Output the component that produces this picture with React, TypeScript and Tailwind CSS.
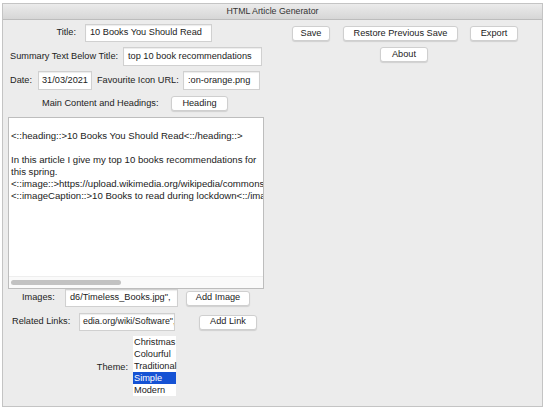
import React from 'react';

const font = { fontFamily: '"Liberation Sans", Arial, sans-serif' };

function Field({ value, className }: { value: string; className: string }) {
  return (
    <div
      className={`shrink-0 bg-white border border-[#d0d0d0] shadow-[inset_0_1px_1px_rgba(0,0,0,0.08)] pl-[4px] flex items-center overflow-hidden whitespace-nowrap text-[#222] ${className}`}
    >
      {value}
    </div>
  );
}

function Btn({ label, className }: { label: string; className: string }) {
  return (
    <div
      className={`shrink-0 bg-white border border-[#cfcfcf] rounded-[3px] shadow-[0_1px_1px_rgba(0,0,0,0.12)] flex items-center justify-center whitespace-nowrap text-[#222] ${className}`}
    >
      {label}
    </div>
  );
}

function Label({ text, className }: { text: string; className: string }) {
  return <span className={`shrink-0 whitespace-nowrap text-[#222] ${className}`}>{text}</span>;
}

export default function App() {
  const themes = ['Christmas', 'Colourful', 'Traditional', 'Simple', 'Modern'];

  return (
    <div className="w-[546px] h-[413px] bg-white pt-[3px] pl-[2px] text-[9.2px]" style={font}>
      <div className="w-[541px] h-[404px] border border-[#c4c4c4] bg-[#ececec] flex flex-col">
        {/* Title bar */}
        <div className="h-[16px] bg-gradient-to-b from-[#ebebeb] to-[#d6d6d6] border-b border-[#bcbcbc] flex items-center justify-center text-[#333] text-[8.8px]">
          HTML Article Generator
        </div>

        <div className="flex flex-1">
          {/* Left column */}
          <div className="w-[268px] shrink-0 flex flex-col">
            <div className="flex items-center h-[18px] mt-[4px]">
              <Label text="Title:" className="w-[73px] text-right" />
              <Field value="10 Books You Should Read" className="ml-[9px] w-[127px] h-[18px]" />
            </div>

            <div className="flex items-center h-[19px] mt-[5px]">
              <Label text="Summary Text Below Title:" className="ml-[7px] w-[113px]" />
              <Field value="top 10 book recommendations" className="w-[139px] h-[19px]" />
            </div>

            <div className="flex items-center h-[19px] mt-[5px]">
              <Label text="Date:" className="ml-[7px] w-[28px]" />
              <Field value="31/03/2021" className="w-[54px] h-[19px] !pl-[3px]" />
              <Label text="Favourite Icon URL:" className="ml-[5px] w-[86px]" />
              <Field value=":on-orange.png" className="w-[77px] h-[19px]" />
            </div>

            <div className="flex items-center h-[15px] mt-[6px]">
              <Label text="Main Content and Headings:" className="ml-[39px] w-[129px]" />
              <Btn label="Heading" className="w-[57px] h-[15px]" />
            </div>

            <div className="ml-[5px] mt-[6px] w-[256px] h-[172px] bg-white border border-[#bdbdbd] flex flex-col">
              <div className="flex-1 overflow-hidden whitespace-pre pl-[2px] pt-[12px] text-[9.6px] leading-[12px] text-[#222]">
                {'<::heading::>10 Books You Should Read<::/heading::>\n\nIn this article I give my top 10 books recommendations for\nthis spring.\n<::image::>https://upload.wikimedia.org/wikipedia/commons\n<::imageCaption::>10 Books to read during lockdown<::/imageCaption::>'}
              </div>
              <div className="h-[12px] bg-[#fafafa] border-t border-[#eeeeee] flex items-center px-[2px]">
                <div className="w-[110px] h-[5px] rounded-full bg-[#c2c2c2]" />
              </div>
            </div>

            <div className="flex items-center h-[18px]">
              <Label text="Images:" className="ml-[19px] w-[43px]" />
              <Field value={'d6/Timeless_Books.jpg",'} className="w-[113px] h-[18px]" />
              <Btn label="Add Image" className="ml-[8px] w-[64px] h-[15px]" />
            </div>

            <div className="flex items-center h-[18px] mt-[6px]">
              <Label text="Related Links:" className="ml-[9px] w-[67px]" />
              <Field value={'edia.org/wiki/Software",'} className="w-[96px] h-[18px] !pl-[3px] text-[8.9px]" />
              <Btn label="Add Link" className="ml-[24px] w-[58px] h-[15px]" />
            </div>

            <div className="flex items-center mt-[5px]">
              <Label text="Theme:" className="w-[130px] text-right pr-[5px] pt-[4px]" />
              <div className="bg-white w-[43px] flex flex-col">
                {themes.map((t) => (
                  <div
                    key={t}
                    className={`h-[12px] leading-[12px] pl-[1px] whitespace-nowrap ${t === 'Simple' ? 'bg-[#1552d4] text-white' : 'text-[#222]'}`}
                  >
                    {t}
                  </div>
                ))}
              </div>
            </div>
          </div>

          {/* Right column */}
          <div className="flex-1 flex flex-col items-start">
            <div className="flex items-center mt-[6px]">
              <Btn label="Save" className="ml-[21px] w-[38px] h-[15px]" />
              <Btn label="Restore Previous Save" className="ml-[13px] w-[115px] h-[15px]" />
              <Btn label="Export" className="ml-[12px] w-[48px] h-[15px]" />
            </div>
            <Btn label="About" className="mt-[6px] ml-[109px] w-[48px] h-[15px]" />
          </div>
        </div>
      </div>
    </div>
  );
}
